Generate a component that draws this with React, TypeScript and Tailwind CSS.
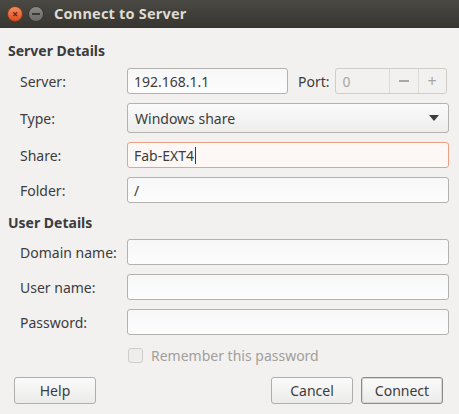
import React from "react";

const font = { fontFamily: '"Noto Sans", "Open Sans", sans-serif' };

function Field({ value, active, cursor }: { value?: string; active?: boolean; cursor?: boolean }) {
  return (
    <div
      className={
        "h-[26px] rounded-[3px] border bg-gradient-to-b from-[#f7f7f7] to-[#fdfdfd] px-[6px] flex items-center text-[14px] text-[#3c3c3c] " +
        (active ? "border-[#eda184] bg-none bg-[#fdf8f5]" : "border-[#b4b2ae]")
      }
    >
      {value}
      {cursor && <span className="ml-[1px] inline-block w-px h-[17px] bg-[#3c3c3c]" />}
    </div>
  );
}

function Row({ label, children }: { label: string; children: React.ReactNode }) {
  return (
    <div className="flex items-center">
      <div className="w-[127px] shrink-0 whitespace-nowrap pl-[20px] text-[14px] text-[#3c3c3c]">{label}</div>
      <div className="w-[322px] shrink-0">{children}</div>
    </div>
  );
}

function Button({ label, primary }: { label: string; primary?: boolean }) {
  return (
    <button
      className={
        "h-[27px] w-[82px] rounded-[3px] border bg-gradient-to-b from-[#fbfbfb] to-[#ebebea] text-[14px] text-[#3c3c3c] flex items-center justify-center " +
        (primary ? "border-[#8c8a86] shadow-[inset_0_0_0_1px_#d8d7d4]" : "border-[#b0aeaa]")
      }
    >
      {label}
    </button>
  );
}

export default function App() {
  return (
    <div className="w-[459px] h-[414px] bg-[#f2f1f0] overflow-hidden" style={font}>
      <div className="h-[28px] bg-gradient-to-b from-[#4a4944] to-[#36352f] flex items-center pl-[7px]">
        <div className="w-[16px] h-[16px] rounded-full bg-gradient-to-b from-[#f48b5c] to-[#df4a1c] border border-[#7a3a22] flex items-center justify-center text-[10px] leading-none text-[#5a2210] font-bold">
          ×
        </div>
        <div className="ml-[5px] w-[16px] h-[16px] rounded-full bg-gradient-to-b from-[#8a8985] to-[#6b6a66] border border-[#3a3935] flex items-center justify-center">
          <div className="w-[8px] h-[2px] bg-[#3b3a36]" />
        </div>
        <div className="ml-[10px] text-[14.5px] font-bold text-[#dfdbd2] tracking-[0.2px]">Connect to Server</div>
      </div>

      <div className="pt-[12px]">
        <div className="pl-[8px] h-[20px] flex items-center text-[14px] font-bold text-[#3c3c3c]">Server Details</div>

        <div className="mt-[8px] flex flex-col gap-[9px]">
          <Row label="Server:">
            <div className="flex items-center">
              <div className="w-[161px]">
                <Field value="192.168.1.1" />
              </div>
              <div className="ml-[10px] text-[14px] text-[#3c3c3c]">Port:</div>
              <div className="ml-[5px] h-[26px] w-[112px] rounded-[3px] border border-[#cfcdc9] bg-[#f2f1f0] flex text-[14px] text-[#a9a7a3]">
                <div className="w-[54px] flex items-center pl-[7px] border-r border-[#dcdad6]">0</div>
                <div className="w-[29px] flex items-center justify-center border-r border-[#dcdad6]">
                  <div className="w-[10px] h-[1.5px] bg-[#a9a7a3]" />
                </div>
                <div className="flex-1 flex items-center justify-center text-[16px]">+</div>
              </div>
            </div>
          </Row>
          <Row label="Type:">
            <div className="h-[30px] rounded-[3px] border border-[#b4b2ae] bg-gradient-to-b from-[#fbfbfb] to-[#ededec] flex items-center justify-between px-[7px] text-[14px] text-[#3c3c3c]">
              <span>Windows share</span>
              <svg width="10" height="6" viewBox="0 0 10 6" className="mr-[2px]">
                <path d="M0 0h10L5 6z" fill="#3c3c3c" />
              </svg>
            </div>
          </Row>
          <Row label="Share:">
            <Field value="Fab-EXT4" active cursor />
          </Row>
          <Row label="Folder:">
            <Field value="/" />
          </Row>
        </div>

        <div className="mt-[9px] pl-[8px] h-[20px] flex items-center text-[14px] font-bold text-[#3c3c3c]">User Details</div>

        <div className="mt-[7px] flex flex-col gap-[9px]">
          <Row label="Domain name:">
            <Field />
          </Row>
          <Row label="User name:">
            <Field />
          </Row>
          <Row label="Password:">
            <Field />
          </Row>
        </div>

        <div className="mt-[10px] pl-[128px] flex items-center">
          <div className="w-[15px] h-[15px] rounded-[3px] border border-[#cfcdc9] bg-[#eeedeb]" />
          <div className="ml-[8px] text-[14px] text-[#a19f9b]">Remember this password</div>
        </div>

        <div className="mt-[11px] flex items-center pl-[14px]">
          <Button label="Help" />
          <div className="ml-auto flex gap-[8px] pr-[16px]">
            <Button label="Cancel" />
            <Button label="Connect" primary />
          </div>
        </div>
      </div>
    </div>
  );
}
